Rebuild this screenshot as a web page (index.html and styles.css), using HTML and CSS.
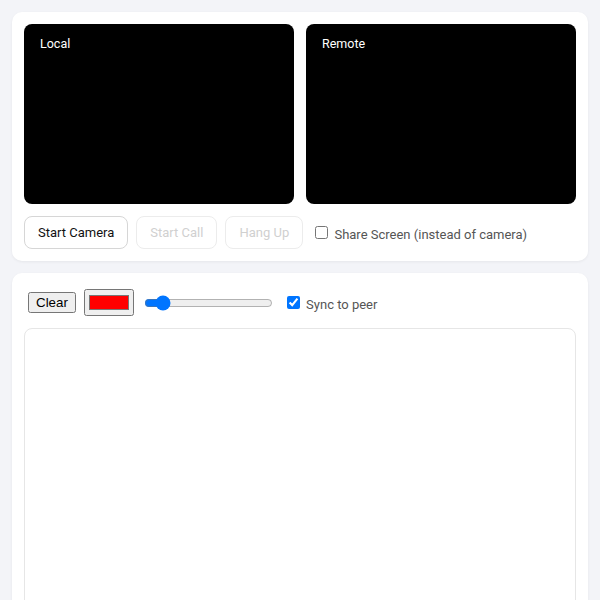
FILE: index.html
```html
<!DOCTYPE html>
<html lang="en">
<head>
  <meta charset="UTF-8" />
  <meta name="viewport" content="width=device-width, initial-scale=1.0" />
  <title>Video Call + Whiteboard</title>
  <link rel="stylesheet" href="styles.css">
</head>
<body>
  <!-- Video panel -->
  <div class="card">
    <div class="videos">
      <div class="video">
        <span class="video-label">Local</span>
      </div>
      <div class="video">
        <span class="video-label">Remote</span>
      </div>
    </div>
    <div class="actions">
      <button class="btn">Start Camera</button>
      <button class="btn" disabled>Start Call</button>
      <button class="btn" disabled>Hang Up</button>
      <label class="option"><input type="checkbox"> Share Screen (instead of camera)</label>
    </div>
  </div>

  <!-- Whiteboard panel -->
  <div class="card">
    <div class="controls">
      <button>Clear</button>
      <input type="color" value="#ff0000">
      <input type="range" min="1" max="40" value="5">
      <label class="option"><input type="checkbox" checked> Sync to peer</label>
    </div>
    <div class="board"></div>
  </div>
</body>
</html>
```

FILE: styles.css
```css
body {
  margin: 0;
  padding: 12px;
  background-color: #f3f4f8;
  font-family: Roboto, "Liberation Sans", sans-serif;
  font-size: 13px;
  color: #222;
  display: flex;
  flex-direction: column;
  gap: 12px;
}

.card {
  background: #fff;
  border-radius: 10px;
  padding: 12px;
  box-shadow: 0 1px 3px rgba(0, 0, 0, 0.06);
}

.videos {
  display: grid;
  grid-template-columns: 1fr 1fr;
  gap: 12px;
}

.video {
  position: relative;
  height: 180px;
  background: #000;
  border-radius: 8px;
}

.video-label {
  position: absolute;
  top: 8px;
  left: 8px;
  padding: 4px 8px;
  font-size: 12.5px;
  line-height: 16px;
  color: #fff;
}

.actions {
  display: flex;
  align-items: center;
  gap: 8px;
  margin-top: 12px;
}

.btn {
  font-family: inherit;
  font-size: 13px;
  line-height: 17px;
  padding: 7px 13px;
  background: #fff;
  color: #111;
  border: 1px solid #d6d6d6;
  border-radius: 8px;
}

.btn:disabled {
  color: #d0d0d0;
  border-color: #ececec;
}

.option {
  color: #555;
  font-size: 13px;
}

.controls {
  display: flex;
  align-items: center;
  gap: 8px;
  padding: 4px;
  margin-bottom: 8px;
}

.board {
  height: 420px;
  border: 1px solid #e6e6e6;
  border-radius: 8px;
}
```
